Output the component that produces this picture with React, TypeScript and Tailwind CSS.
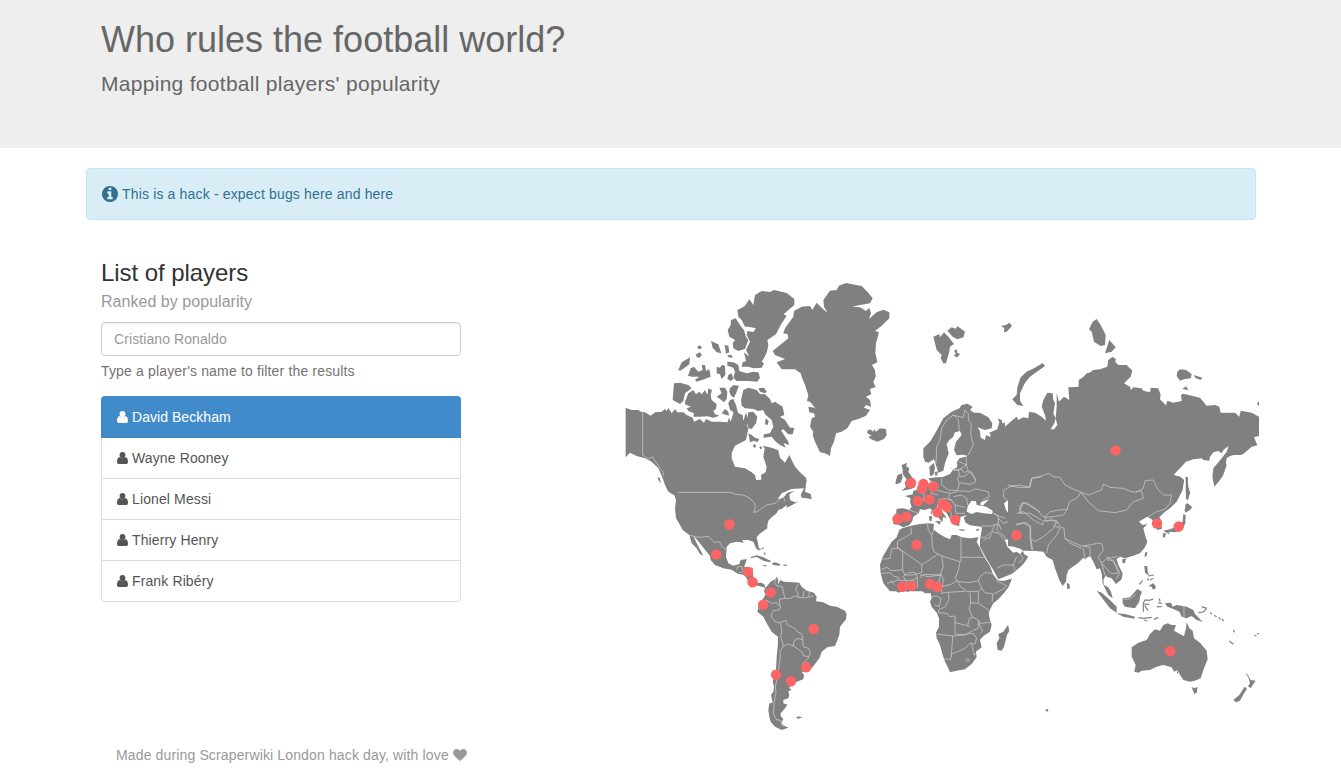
import React from "react";

type Region = {
  origin: [number, number];
  land: string[];
  water?: string[];
  borders?: string[];
  islets?: string[];
};

/* Outlines are drawn at three units per pixel, relative to each region's origin. */
const regions: Region[] = [
  {
    // Northern Canada and Alaska
    origin: [620, 275],
    land: [
      "352,105 363,100 375,92 388,73 400,90 405,60 425,48 450,51 462,45 500,54 523,72 523,90 508,103 491,118 500,122 482,150 468,178 442,195 445,210 441,230 432,250 425,260 432,265 425,278 400,280 385,275 365,275 368,262 378,258 372,232 388,245 378,225 390,200 380,180 382,168 400,171 408,160 385,155 375,155 365,135 355,125",
      "333,135 347,130 360,150 372,165 378,185 385,195 375,222 355,228 340,220 338,205 345,195 328,185 323,165 332,150",
      "175,285 185,262 210,247 208,268 192,280 180,287",
      "232,215 240,211 246,218 240,223 233,220",
      "228,238 240,232 246,240 238,248 230,247",
      "273,198 295,208 304,235 290,232 278,218",
      "314,210 325,212 328,232 318,236",
      "322,240 335,240 338,248 326,247",
      "204,302 212,280 222,275 235,290 248,285 245,270 255,270 258,288 268,282 272,305 255,312 230,320 225,314 238,305 215,305",
      "290,275 300,278 305,270 315,272 316,300 305,312 300,298 290,295",
      "322,260 340,262 355,270 358,288 380,295 400,290 415,292 420,308 412,320 385,318 350,318 340,308 345,290 340,278 322,272",
      "325,300 335,295 340,312 332,318 322,312",
      "162,325 180,323 205,330 215,340 195,355 190,378 180,387 158,375 160,350",
      "195,380 205,355 220,345 228,358 238,350 245,358 255,345 262,360 265,340 276,345 272,360 275,375 290,388 288,402 280,408 285,418 298,422 280,428 262,424 240,425 220,425 222,415 205,408 200,400 213,395 195,388",
      "290,365 305,355 298,338 315,338 322,350 320,372 312,382 300,372",
      "330,340 340,330 357,332 350,350 342,368 333,362 328,350",
      "330,375 340,372 350,395 345,412 330,405 325,385",
      "305,415 315,402 325,410 327,422 312,418",
      "363,375 370,345 385,338 400,342 410,345 420,358 434,357 450,372 455,385 465,380 488,395 493,420 480,425 495,435 510,458 523,458 518,478 505,478 490,463 483,466 505,500 507,510 490,504 498,518 480,510 465,498 455,485 430,488 432,478 450,475 460,455 455,435 435,418 430,405 415,408 400,402 375,400 365,392",
      "415,340 432,338 440,350 435,355 420,350",
      "437,430 446,437 443,450 435,448",
      "385,475 395,480 405,488 418,492 412,502 402,497 390,502",
      "398,510 406,508 408,516 402,518",
      "418,516 424,514 427,520 421,523",
      "385,412 400,410 412,425 408,445 395,462 385,460 380,440",
      "17,398 35,405 55,405 62,410 75,412 92,422 105,412 125,410 135,402 140,408 145,399 155,415 165,402 172,412 190,412 200,420 218,428 222,440 240,432 252,443 258,432 275,440 300,440 322,442 327,428 332,440 340,415 330,390 338,378 350,400 355,415 368,420 370,438 378,412 386,440 380,450 385,462 382,475 378,495 365,502 345,512 335,535 335,550 345,575 375,580 395,592 405,600 410,622 418,632 425,628 423,600 437,592 440,575 430,545 434,520 428,512 455,518 475,526 480,548 495,563 508,540 525,575 540,592 558,608 560,618 555,640 165,660 145,650 135,630 128,610 115,580 95,560 75,550 50,543 30,533 17,547",
    ],
    borders: [
      "68,412 68,540 85,552 98,545 107,560 120,580 130,592 130,602",
    ],
  },
  {
    // United States, Mexico, Central America
    origin: [620, 440],
    land: [
      "140,140 410,120 540,110 558,122 555,135 520,145 485,160 473,178 490,173 502,158 524,152 508,163 510,180 525,187 535,184 517,195 500,203 500,195 485,207 475,210 470,220 455,232 445,242 442,255 442,265 435,270 418,282 410,292 415,315 418,333 408,325 400,305 385,300 367,300 371,308 350,305 330,310 320,320 318,350 325,370 340,377 358,372 362,360 380,357 375,375 372,380 398,383 400,410 410,430 425,428 435,435 430,442 418,438 400,435 385,425 375,405 355,402 335,389 310,385 285,375 272,360 270,348 248,320 232,300 220,288 228,305 238,325 250,347 240,342 230,325 215,310 208,285 188,270 180,255 168,235 165,205 168,180 163,165 150,158",
      "143,147 160,152 175,165 172,172 155,160",
      "113,112 120,113 120,120 124,130 116,122",
      "542,165 552,145 558,136 555,155 572,162 575,178 560,175 545,173",
      "390,352 410,346 430,352 453,363 450,367 430,362 410,351 395,354",
      "455,370 465,367 482,373 478,377 460,375",
    ],
    islets: ["490,376 501,376", "430,376 440,378", "425,326 431,323", "432,338 436,344", "418,325 421,330"],
    borders: [
      "174,157 333,157 345,163 370,165 390,175 405,192 405,210 400,217 412,215 425,205 440,195 465,190 480,178 490,168 495,185",
      "205,285 238,292 265,289 282,307 298,305 306,320 318,328",
      "350,390 352,380 366,380 370,395 357,398",
      "370,390 395,388",
    ],
  },
  {
    // South America
    origin: [740, 560],
    land: [
      "76,84 92,65 105,58 110,50 115,60 113,75 118,65 122,60 132,65 160,67 178,68 185,80 200,92 222,98 230,110 228,124 248,126 270,137 290,140 315,152 320,162 318,178 300,200 298,225 290,245 285,258 262,262 245,275 240,292 225,312 215,325 200,335 185,335 192,345 190,358 170,365 150,380 147,385 155,388 145,395 148,405 145,415 130,420 130,430 142,434 135,445 122,460 122,468 130,478 125,485 128,495 145,503 125,510 105,500 92,485 88,470 85,450 88,430 98,428 93,405 100,395 102,380 98,365 108,330 110,290 114,250 114,230 95,215 80,190 70,170 52,155 55,145 55,130 68,118 76,105 72,92",
      "168,473 176,469 187,472 175,476",
    ],
    islets: ["48,75 60,70 70,75 75,84"],
    borders: [
      "108,55 104,68 110,78 127,80 130,95 135,115 118,118 120,140 110,128 95,130 78,120",
      "122,140 118,150 100,152 93,168 105,185 120,188 124,200 125,215 122,228 130,258",
      "120,188 138,181 142,195 165,205 172,215 185,222 188,240",
      "130,258 145,252 160,258 162,243 175,235 188,240 190,260 205,265 212,278 206,290 190,287 186,276 160,258",
      "207,290 202,298 188,310 190,325",
      "130,258 120,275 121,290 117,320 113,350 106,380 108,400 102,430 100,460 110,480 120,480 128,500",
      "135,115 148,116 165,108 176,112 172,95 166,90 175,72",
      "176,112 190,114 205,112 222,107",
      "192,93 189,112",
      "208,95 206,111",
      "58,146 72,140 80,120",
    ],
  },
  {
    // Greenland and Iceland
    origin: [760, 275],
    land: [
      "192,95 190,75 210,47 230,45 237,32 258,24 305,33 322,50 338,70 330,85 300,90 277,95 300,97 318,108 328,98 333,115 327,132 350,112 370,104 388,112 388,130 365,152 345,168 357,172 348,205 346,235 352,262 336,270 345,285 347,305 340,322 347,336 330,342 334,358 318,365 330,375 333,395 318,390 312,398 330,405 318,422 295,432 275,438 262,460 245,470 228,475 222,500 213,520 210,543 195,535 180,532 165,500 158,480 160,470 150,455 155,430 165,425 162,415 148,412 145,395 164,398 168,402 150,380 141,378 145,360 135,330 125,305 122,295 105,283 65,283 50,262 75,252 45,240 38,228 50,218 85,190 83,178 70,175 75,160 100,125 102,108 125,95 150,93 157,105 170,83 185,98 203,114",
      "322,468 330,463 340,470 342,462 348,470 360,460 378,462 380,480 372,492 352,500 332,492 325,485 335,482 322,475",
    ],
  },
  {
    // Scandinavia, Barents Sea
    origin: [910, 300],
    land: [
      "40,445 60,425 78,395 100,355 125,335 148,325 155,315 172,311 188,320 180,330 192,338 210,338 235,352 247,370 245,385 225,390 202,382 210,393 212,413 225,420 228,405 240,411 242,405 238,398 262,388 268,365 262,355 275,360 277,370 285,368 285,380 305,362 320,350 325,360 340,352 355,355 357,335 375,338 395,350 408,362 405,345 395,320 400,300 412,278 428,280 430,300 435,310 430,340 437,355 433,370 422,388 432,388 442,375 437,355 440,320 440,280 447,305 462,290 478,300 475,262 508,260 512,240 530,220 545,217 545,545 100,545 100,530 120,522 130,508 145,500 140,488 148,475 175,468 158,464 140,466 132,450 138,425 155,405 150,393 135,397 130,410 118,420 110,432 116,460 105,490 100,512 85,518 78,495 72,478 55,488 45,485 40,470",
      "58,500 72,488 75,505 70,525 60,528",
      "74,516 83,514 82,526 76,527",
      "70,110 88,102 90,112 102,97 115,110 132,132 120,140 118,155 108,190 100,190 92,175 95,165 80,150",
      "112,92 125,82 138,86 142,78 165,95 160,112 142,118 128,110",
      "132,152 140,148 142,158 150,162 142,172 132,168 137,160",
      "272,78 288,75 298,68 306,78 290,95 282,97 283,84",
      "307,298 320,285 322,262 332,232 350,215 375,203 398,189 405,198 385,212 360,230 345,248 330,280 330,302 340,318 322,315",
    ],
    borders: [
      "78,490 80,440 90,420 95,385 110,360 130,345 145,358 148,392",
      "128,345 160,353 165,330 175,340 175,360 184,370 182,400 190,435 175,465",
      "148,485 170,495 168,472",
      "130,512 155,508 163,518 175,512 168,495",
      "175,512 185,517 197,540",
    ],
  },
  {
    // Siberia
    origin: [1080, 300],
    land: [
      "-4,240 20,225 40,210 60,208 82,200 85,180 98,170 108,178 106,185 115,195 140,195 157,212 152,230 132,250 150,260 153,270 160,262 185,265 190,272 210,277 212,263 235,265 242,285 240,298 258,316 262,302 280,308 305,303 303,285 310,281 360,293 380,317 405,315 418,320 422,338 465,338 478,350 482,332 515,338 537,350 537,408 522,412 532,436 515,440 490,462 482,465 462,465 450,468 440,475 438,490 440,495 430,525 420,540 403,560 397,530 400,505 425,475 440,455 446,438 430,450 425,460 415,453 400,457 390,470 388,482 370,480 365,475 340,478 318,485 300,505 280,525 300,530 312,540 308,560 298,580 288,604 -4,604",
      "50,57 62,75 77,105 75,135 62,138 42,125 35,95 27,88 38,65",
      "88,120 107,142 95,155 75,160",
      "292,215 300,208 318,210 335,222 332,235 312,238 300,242 290,228",
      "342,225 367,233 362,240 345,233",
      "307,267 318,259 326,270",
      "530,312 538,303 538,318",
      "316,532 323,530 325,560 330,577 324,600 318,597 320,565",
    ],
  },
  {
    // Europe, Middle East, northern Africa
    origin: [870, 450],
    land: [
      "175,85 200,82 245,80 258,68 262,45 278,30 320,0 514,0 514,302 480,302 458,298 462,312 475,320 462,340 450,352 425,372 385,388 370,360 350,328 330,290 330,270 335,240 335,230 315,228 300,226 287,218 281,203 292,195 272,200 268,213 268,228 252,225 240,208 230,190 215,172 203,162 202,172 222,192 230,205 219,201 217,217 213,212 205,202 190,187 180,175 165,180 150,178 146,190 130,200 127,212 118,225 100,232 88,226 70,222 68,205 78,190 80,176 100,175 118,180 125,170 120,155 122,145 105,138 128,133 130,122 150,118 165,110 183,95",
      "95,45 112,38 108,48 118,55 115,65 125,80 138,95 135,112 120,118 95,122 108,110 104,98 110,88 98,72 98,60",
      "76,98 82,76 95,70 98,80 92,98 78,103",
      "195,213 213,214 209,224",
      "177,199 186,198 185,213 178,212",
      "181,185 186,183 186,195",
      "96,235 120,228 150,222 175,220 192,222 190,238 205,250 225,262 240,268 245,255 260,255 275,262 300,265 326,262 320,275 328,290 345,325 360,348 370,375 385,392 400,395 425,386 414,415 400,424 60,424 40,400 32,370 30,345 38,320 50,300 65,275 80,262 88,240",
    ],
    water: [
      "290,185 293,168 305,152 318,154 320,165 338,168 348,170 368,182 366,192 340,190 320,186 305,192",
      "330,163 335,155 358,148 345,160 338,167",
      "402,160 415,150 432,150 437,160 425,165 422,178 438,185 430,195 440,205 438,222 418,222 415,205 419,195 408,180",
      "405,270 412,268 425,285 440,293 452,296 460,302 450,312 440,305 430,308 412,290",
    ],
    islets: ["268,239 284,241", "318,241 328,238"],
    borders: [
      "215,85 215,105 235,120 262,122 268,100 262,85 268,75 265,60 290,45",
      "240,55 265,60", "268,80 285,78 300,65 310,78 318,95 300,103 268,98",
      "262,122 300,125 310,118 325,118 355,125 358,140 338,150",
      "200,120 218,125 240,130 262,125", "185,92 180,115 185,130 205,135",
      "150,120 162,135 160,150 180,160", "118,180 145,190", "82,188 85,225",
      "205,150 225,145 245,150 255,165 285,172", "250,140 275,135 290,145 293,165", "240,130 235,145 248,155",
      "255,165 258,190 285,190", "235,175 245,190 240,208",
      "352,180 380,195 405,205", "370,190 385,200 385,220 395,240", "385,205 400,220 415,215",
      "335,228 360,228 385,222", "375,225 365,245 345,262 333,262",
      "365,245 385,250 405,272", "385,222 380,240 402,258 410,270", "340,270 360,262 365,250",
      "380,355 400,345 430,345 440,320", "430,345 435,360", "450,312 460,325 445,340",
      "415,155 400,140 402,120 420,110 450,105 478,112 485,85 514,80",
      "455,170 460,158 475,165 510,185", "440,225 460,218 480,230 480,260 485,300", "450,165 450,190 480,190 514,210",
      "122,232 125,250 105,262 82,275 82,295 65,295 60,325 35,328",
      "82,292 98,305 98,360 65,362 50,352 35,358",
      "82,292 150,340 155,345 205,312",
      "172,222 175,240 185,255 187,290 192,305 215,318 270,335",
      "192,240 185,255",
      "273,262 273,335", "273,322 342,322",
      "215,318 220,350 210,375 160,373 150,385",
      "155,345 155,368 130,375 105,375 98,360", "270,335 265,360 258,380",
    ],
  },
  {
    // Central and southern Africa
    origin: [870, 560],
    land: [
      "34,42 60,30 340,20 364,40 378,60 400,63 425,56 420,70 405,95 385,118 370,130 362,145 356,160 360,180 365,195 360,215 340,228 330,240 335,262 318,275 320,292 305,312 285,328 260,332 240,337 235,325 225,305 218,285 210,255 200,235 198,218 207,200 207,175 200,158 185,140 180,125 185,115 182,100 165,100 150,88 140,85 115,95 100,92 85,98 65,82 52,72 40,55",
      "414,195 418,212 411,225 402,260 395,272 383,270 380,250 388,235 385,222 400,215 408,203",
    ],
    borders: [
      "260,45 255,55 265,65 300,68 325,62 330,50 345,38 370,40 382,52 380,62 410,78 395,90 370,102 345,98 335,85 325,62",
      "212,40 220,60 217,80 245,72 262,62 272,80 290,94 325,95 335,85",
      "215,82 215,100 230,97 285,94",
      "235,98 237,120 225,140 205,150 205,158 232,160 238,170 255,168 255,188 285,195 300,200",
      "300,98 302,128 325,130 358,152", "325,95 325,128", "368,103 366,128",
      "302,128 298,150 308,172 325,180 330,190 362,187",
      "255,188 255,222 285,225 308,212 325,205 325,180", "200,222 250,228 285,224",
      "248,228 246,260 243,298 220,297", "243,282 265,275 285,265 300,250 315,252 320,235 310,220 290,222",
      "293,196 298,175 310,172", "328,190 332,203 338,212 330,220",
      "287,300 293,295 299,300 293,307 287,300", "305,253 310,275 316,285 309,283",
      "34,40 60,38 70,48 85,52 85,60 70,65 52,70", "60,60 75,75", "85,60 100,62 108,60 105,92",
      "98,50 115,38 135,38 142,50 142,85", "132,60 132,85", "100,50 108,62 130,60 142,52",
      "150,45 175,50 212,45 205,70 185,85", "185,110 200,108 213,115 208,140 195,135",
    ],
  },
  {
    // Southern and eastern Asia
    origin: [1010, 460],
    land: [
      "-6,0 525,0 490,45 510,50 522,60 518,90 500,125 480,145 465,155 455,165 448,172 456,185 455,207 442,210 435,190 425,178 412,170 395,180 387,185 398,195 412,192 400,205 405,225 412,245 405,262 390,280 370,287 345,295 330,290 320,297 325,315 338,340 335,358 318,372 305,355 290,350 288,345 280,360 282,375 295,382 303,395 308,415 295,405 285,385 278,370 275,340 270,325 260,328 252,310 242,290 235,290 225,298 220,293 205,308 175,330 170,345 168,365 158,378 148,360 135,325 128,300 110,290 100,275 70,272 40,272 25,262 -6,258",
      "170,368 178,372 180,385 172,388",
      "405,278 412,275 410,288 404,292",
      "337,298 348,295 345,310 337,308",
      "524,150 527,132 533,130 547,142 540,150 526,158",
      "520,162 527,165 526,190 515,212 495,217 480,215 470,218 460,212 485,206 505,195 518,185",
      "458,220 468,220 465,232 460,233", "470,218 480,217 476,223",
      "528,50 533,58 533,85 541,100 533,110 528,118 527,80",
      "403,318 412,318 413,335 418,348 405,338",
      "415,378 430,370 437,378 436,387 428,388 425,380",
      "260,392 275,398 300,420 320,440 320,458 300,445 285,425",
      "320,460 345,462 375,470 373,476 340,470",
      "338,415 360,412 382,387 396,395 390,410 388,425 375,445 345,440 338,430",
      "465,430 483,428 488,440 500,435 530,440 550,450 555,462 578,486 560,480 545,468 530,475 515,470 508,455 485,445 472,440",
    ],
    islets: [
      "400,455 400,428 406,420 418,421 430,417", "402,432 418,433", "404,436 414,452",
      "385,473 400,475 425,472", "403,480 412,483", "432,478 445,472", "448,415 450,424", "440,440 455,440", "445,428 455,430",
      "565,458 580,456 590,446", "575,440 590,445", "388,373 398,361", "415,348 432,345", "420,360 430,355", "412,355 416,362",
    ],
    borders: [
      "-6,75 25,82 60,82 65,55 90,50 115,40 130,50 150,52 165,75 185,85 213,97 200,115 178,125 172,148 145,150 120,155 105,170",
      "30,158 35,130 50,128 75,145 95,165 105,172 130,170 160,165 172,148",
      "213,97 235,105 275,90 280,72 300,82 340,85 370,97 395,92 400,115 370,125 350,150 315,158 265,152 235,125 213,97",
      "378,97 400,85 405,62 430,60 445,90 460,105 485,105 480,130 465,148 440,155 412,172",
      "20,160 40,155 70,180 98,195 100,182 140,182 150,200 162,205 165,235 190,248 215,258 240,255 260,250 275,250 280,270 265,290 275,310 290,295 325,290",
      "18,192 50,188 62,200 62,235 68,270", "62,235 75,245 100,230 130,205 140,185",
      "110,280 115,255 140,225 150,205 130,195", "165,235 180,250 215,265", "218,258 240,262 240,290", "220,265 225,295",
      "290,300 310,300 325,340 302,340 285,320 275,312", "275,310 285,345", "290,290 315,310 330,340 318,358",
      "342,418 362,416 378,402", "440,180 455,182", "522,438 522,471", "105,172 110,185 125,175 140,190",
    ],
  },
  {
    // Australia and the Pacific
    origin: [1100, 560],
    land: [
      "103,335 107,315 95,290 95,262 115,248 140,240 150,222 165,208 180,212 190,195 203,190 215,195 228,195 222,212 240,222 252,228 258,205 260,187 268,205 278,212 282,235 300,248 320,272 323,298 312,325 302,355 285,362 270,365 250,360 240,345 233,330 222,335 215,322 190,315 170,320 150,330 125,332 115,338",
      "275,382 284,384 293,381 290,398 283,402",
      "435,337 445,347 452,360 467,362 460,372 452,385 444,379 450,370 446,355",
      "434,380 441,386 432,400 420,422 408,427 400,420 418,405",
    ],
    islets: ["388,243 400,253", "400,210 404,217", "463,228 469,226", "471,222 477,220", "330,158 336,162", "342,166 350,170", "356,172 362,178", "366,177 371,183", "235,330 232,340"],
  },
];

const markers: [number, number][] = [
  [729.5, 524.5], [716.3, 554.4], [748, 572], [752.6, 582.2], [770.6, 592.4], [763.2, 604.6],
  [813.7, 629], [806.2, 667.2], [776, 674.6], [791, 681.2], [911, 483], [923.4, 484], [922, 488.8],
  [933.5, 486.5], [929.2, 499.4], [917.8, 501], [906.4, 516.6], [897.6, 519], [942.5, 504], [947, 507],
  [937.5, 512.4], [955.2, 519.6], [916.6, 545], [902.4, 586.8], [911.4, 585.9], [930, 584], [937.3, 587],
  [1016.5, 535.2], [1115.6, 450.4], [1157, 523.5], [1178.7, 526.5], [1170.2, 651.2],
];

function WorldMap() {
  return (
    <svg className="block h-[460px] w-[634px]" viewBox="625 275 634 460" role="img" aria-label="World map">
      {regions.map((r, i) => (
        <g key={i} transform={`translate(${r.origin[0]} ${r.origin[1]}) scale(0.33333)`}>
          {r.land.map((p, j) => <polygon key={j} points={p} fill="#808080" />)}
          {r.water?.map((p, j) => <polygon key={j} points={p} fill="#fff" />)}
          {r.islets?.map((p, j) => <polyline key={j} points={p} fill="none" stroke="#808080" strokeWidth="3.6" />)}
        </g>
      ))}
      {regions.map((r, i) => (
        <g key={i} transform={`translate(${r.origin[0]} ${r.origin[1]}) scale(0.33333)`}>
          {r.borders?.map((p, j) => (
            <polyline key={j} points={p} fill="none" stroke="#d4d4d4" strokeWidth="2" strokeLinejoin="round" />
          ))}
        </g>
      ))}
      <circle cx="1047" cy="710.3" r="1.3" fill="#808080" />
      {markers.map(([x, y], i) => <circle key={i} cx={x} cy={y} r="5.2" fill="#ff6464" />)}
    </svg>
  );
}

function UserIcon() {
  return (
    <svg className="mr-1 h-3 w-[11px] shrink-0" viewBox="0 0 11 12" fill="currentColor">
      <ellipse cx="5.5" cy="3.1" rx="2.9" ry="3.1" />
      <path d="M0 10C0 7 .9 5.1 2.9 5c1.5 1.6 3.7 1.6 5.2 0 2 .1 2.9 2 2.9 5 0 1.3-.7 2-1.7 2H1.7C.7 12 0 11.3 0 10z" />
    </svg>
  );
}

function InfoIcon() {
  return (
    <svg className="mr-1 size-4 shrink-0" viewBox="128 128 1536 1536" fill="currentColor">
      <path d="M1152 1376v-160q0-14-9-23t-23-9h-96v-512q0-14-9-23t-23-9h-320q-14 0-23 9t-9 23v160q0 14 9 23t23 9h96v320h-96q-14 0-23 9t-9 23v160q0 14 9 23t23 9h448q14 0 23-9t9-23zm-128-896v-160q0-14-9-23t-23-9h-192q-14 0-23 9t-9 23v160q0 14 9 23t23 9h192q14 0 23-9t9-23zm640 416q0 209-103 385.5t-279.5 279.5-385.5 103-385.5-103-279.5-279.5-103-385.5 103-385.5 279.5-279.5 385.5-103 385.5 103 279.5 279.5 103 385.5z" />
    </svg>
  );
}

function HeartIcon() {
  return (
    <svg className="ml-1 h-3 w-3.5 shrink-0" viewBox="0 128 1792 1536" preserveAspectRatio="none" fill="currentColor">
      <path d="M896 1664q-26 0-44-18l-624-602q-10-8-27.5-26t-55.5-65.5-68-97.5-53.5-121-23.5-138q0-220 127-344t351-124q62 0 126.5 21.5t120 58 95.5 68.5 76 68q36-36 76-68t95.5-68.5 120-58 126.5-21.5q224 0 351 124t127 344q0 221-229 450l-623 600q-18 18-44 18z" />
    </svg>
  );
}

const players = ["David Beckham", "Wayne Rooney", "Lionel Messi", "Thierry Henry", "Frank Ribéry"];

export default function App() {
  return (
    <div className="h-[775px] overflow-hidden bg-white font-['Liberation_Sans',Arial,sans-serif] text-sm leading-5 text-[#333]">
      <header className="h-[148px] bg-[#eee] pt-5 pl-[101px] text-[#666]">
        <h1 className="text-[36px] leading-10">Who rules the football world?</h1>
        <p className="mt-[9px] text-[21px] leading-[30px] tracking-[0.29px]">Mapping football players&apos; popularity</p>
      </header>

      <div className="mt-5 ml-[86px] flex h-[52px] w-[1170px] items-center rounded-[4px] border border-[#bce8f1] bg-[#d9edf7] px-[15px] text-[#31708f]">
        <InfoIcon />
        <span className="tracking-[0.16px]">This is a hack - expect bugs here and here</span>
      </div>

      <main className="flex h-[515px] pt-[38px] pl-[101px]">
        <section className="w-[360px] shrink-0">
          <h2 className="text-2xl leading-[30px] tracking-[-0.06px]">List of players</h2>
          <p className="mt-0.5 text-base leading-6 tracking-[0.04px] text-[#999]">Ranked by popularity</p>
          <input
            className="mt-2 block h-[34px] w-full rounded-[4px] border border-[#ccc] px-3 text-sm tracking-[0.09px] shadow-[inset_0_1px_1px_rgba(0,0,0,0.075)] placeholder:text-[#999]"
            placeholder="Cristiano Ronaldo"
          />
          <p className="mt-[5px] tracking-[0.16px] text-[#737373]">Type a player&apos;s name to filter the results</p>
          <ul className="mt-[15px] text-[#555]">
            {players.map((name, i) => (
              <li
                key={name}
                className={
                  i === 0
                    ? "flex h-[42px] items-center rounded-t-[4px] bg-[#428bca] px-4 tracking-[0.05px] text-white"
                    : "flex h-[41px] items-center border-x border-b border-[#ddd] px-[15px] tracking-[0.12px] last:rounded-b-[4px]"
                }
              >
                <UserIcon />
                <span>{name}</span>
              </li>
            ))}
          </ul>
        </section>
        <section className="ml-[164px] pt-[17px]">
          <WorldMap />
        </section>
      </main>

      <footer className="flex items-center pt-[10px] pl-[116px] text-[#999]">
        <span className="tracking-[0.14px]">Made during Scraperwiki London hack day, with love</span>
        <HeartIcon />
      </footer>
    </div>
  );
}
